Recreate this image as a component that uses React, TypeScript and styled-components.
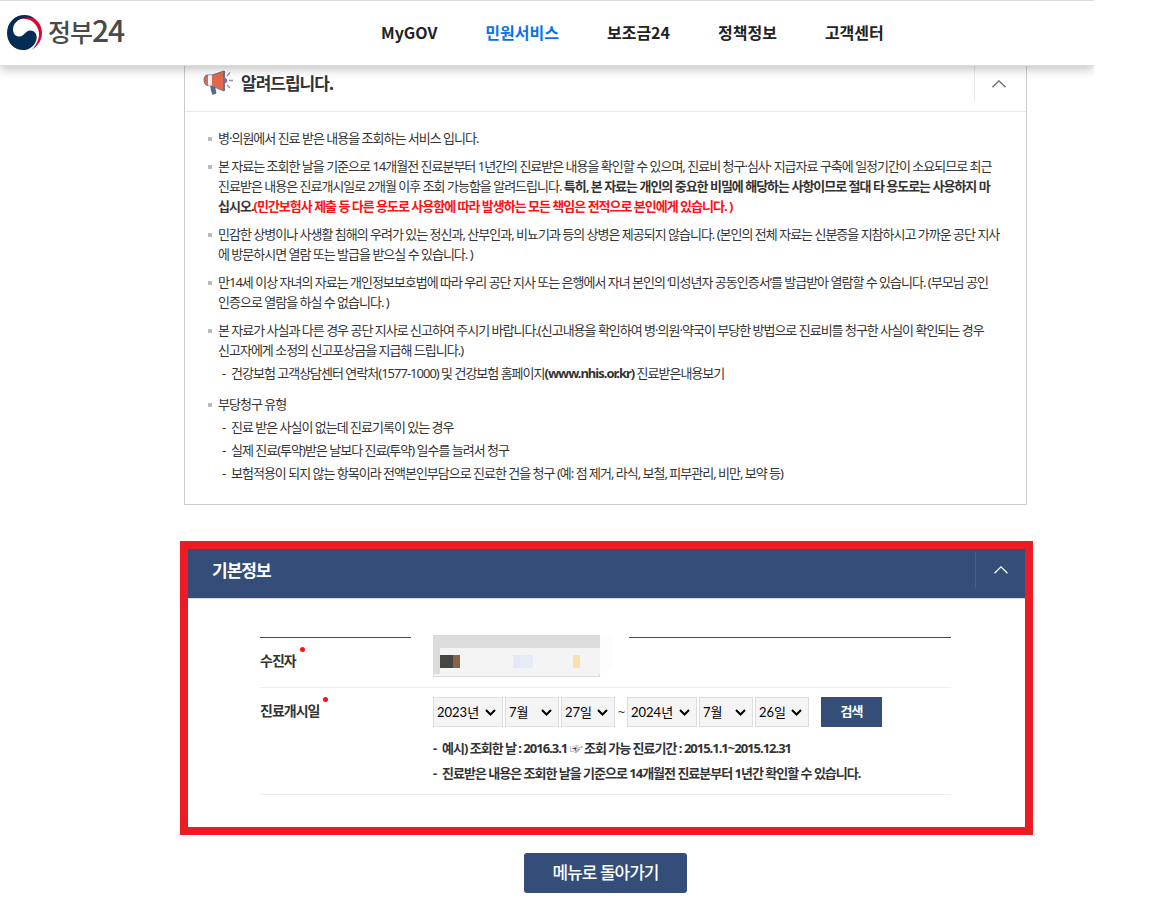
import React from "react";
import styled, { createGlobalStyle } from "styled-components";

const navy = "#344d79";

const GlobalStyle = createGlobalStyle`
  *, *::before, *::after { box-sizing: border-box; }
  body {
    margin: 0;
    background: #fff;
    color: #333;
    font-family: "Noto Sans", "Noto Sans CJK KR", sans-serif;
    font-size: 13px;
    line-height: 20px;
    letter-spacing: -1px;
  }
  button, select { font-family: inherit; }
  h1, h2, ul, p { margin: 0; padding: 0; }
  ul { list-style: none; }
`;

const Page = styled.div`
  margin-right: 58px;
`;

const Header = styled.header`
  position: relative;
  z-index: 1;
  display: flex;
  align-items: center;
  height: 66px;
  padding-bottom: 2px;
  background: #fff;
  border-top: 1px solid #ddd;
  border-bottom: 1px solid #dcdcdc;
  box-shadow: 0 3px 10px rgba(0, 0, 0, 0.25);
  clip-path: inset(0 0 -20px 0);
  font-family: "Noto Sans CJK KR", sans-serif;
`;

const Logo = styled.a`
  display: flex;
  align-items: center;
  gap: 6px;
  width: 381px;
  padding-left: 7px;
  color: #4a4a4a;
  font-size: 25px;
  font-weight: 500;
  line-height: 34px;
  letter-spacing: -1px;
  text-decoration: none;
`;

const LogoText = styled.span`
  padding-bottom: 4px;
`;

const LogoDigits = styled.span`
  font-size: 30px;
`;

const Nav = styled.nav`
  display: flex;
  gap: 48px;
`;

const NavLink = styled.a<{ $active?: boolean }>`
  color: ${(p) => (p.$active ? "#0a73e8" : "#222")};
  font-size: 16px;
  font-weight: 700;
  line-height: 24px;
  letter-spacing: normal;
  text-decoration: none;
`;

const Main = styled.main`
  padding: 0 61px 0 180px;
`;

const Notice = styled.section`
  margin: 0 6px 36px 4px;
  border: 1px solid #ccc;
  border-top: 0;
`;

const NoticeHead = styled.div`
  display: flex;
  align-items: flex-start;
  height: 46px;
  padding-left: 18px;
  border-bottom: 1px solid #e8e8e8;
`;

const Title = styled.h2`
  flex: 1;
  font-family: "Noto Sans CJK KR", sans-serif;
  font-size: 17px;
  font-weight: 700;
  line-height: 24px;
`;

const NoticeTitle = styled(Title)`
  display: flex;
  align-items: center;
  gap: 8px;
  height: 33px;
`;

const Toggle = styled.button<{ $dark?: boolean }>`
  display: flex;
  align-items: center;
  justify-content: center;
  width: ${(p) => (p.$dark ? 50 : 52)}px;
  height: 36px;
  padding: 0 ${(p) => (p.$dark ? 0 : 3)}px 0 0;
  border: 0;
  border-left: 1px solid ${(p) => (p.$dark ? "#47608c" : "#e8e8e8")};
  background: none;
  color: ${(p) => (p.$dark ? "#fff" : "#666")};
`;

const NoticeList = styled.ul`
  display: flex;
  flex-direction: column;
  gap: 8px;
  padding: 16px 16px 21px 23px;
`;

const NoticeItem = styled.li`
  padding-left: 10px;
  background: linear-gradient(#bbb, #bbb) 0 9px / 4px 4px no-repeat;
`;

const SubList = styled.ul`
  display: flex;
  flex-direction: column;
  gap: 3px;
  padding-top: 3px;
`;

const SubItem = styled.li`
  display: flex;
  gap: 4px;
  padding-left: 4px;
  &::before { content: "-"; width: 5px; }
`;

const NoticeGap = styled(SubList)`
  padding-bottom: 3px;
`;

const Warning = styled.strong`
  color: #f11;
`;

const Frame = styled.section`
  border: 8px solid #ed1c24;
`;

const FrameHead = styled.div`
  display: flex;
  align-items: flex-start;
  height: 50px;
  padding: 3px 0 0 24px;
  background: ${navy};
  border-bottom: 1px solid #d0d5de;
`;

const FrameTitle = styled(Title)`
  color: #fff;
  line-height: 36px;
`;

const FrameBody = styled.div`
  padding: 38px 74px 32px 72px;
`;

const Table = styled.table`
  width: 100%;
  table-layout: fixed;
  border-collapse: collapse;
`;

const LabelCol = styled.col`
  width: 151px;
`;

const ValueCol = styled.col`
  width: 218px;
`;

const Row = styled.tr`
  border-bottom: 1px solid #eee;
`;

const LabelCell = styled.th<{ $rule?: boolean }>`
  padding: 9px 0 0;
  vertical-align: top;
  text-align: left;
  border-top: ${(p) => (p.$rule ? `1px solid ${navy}` : "0")};
`;

const Label = styled.label`
  display: flex;
  gap: 4px;
  font-size: 14px;
  line-height: 28px;
  &::after {
    content: "";
    width: 5px;
    height: 5px;
    border-radius: 50%;
    background: #f11;
  }
`;

const MaskCell = styled.td`
  height: 50px;
  padding: 0 0 0 22px;
  vertical-align: top;
`;

const Mask = styled.svg`
  display: block;
  margin-top: -3px;
`;

const RuleCell = styled.td`
  border-top: 1px solid ${navy};
`;

const DateCell = styled.td`
  height: 107px;
  padding: 9px 0 8px 22px;
  vertical-align: top;
`;

const Dates = styled.div`
  display: flex;
  align-items: center;
  gap: 2px;
`;

const SelectBox = styled.span<{ $wide?: boolean }>`
  position: relative;
  display: flex;
  width: ${(p) => (p.$wide ? 70 : 54)}px;
`;

const Select = styled.select`
  appearance: none;
  width: 100%;
  height: 30px;
  padding: 0 0 0 3px;
  border: 1px solid #ddd;
  border-radius: 0;
  background: #f4f4f4;
  color: #000;
  font-family: Lato, "Noto Sans CJK KR", sans-serif;
  font-size: 13px;
  letter-spacing: normal;
`;

const SelectArrow = styled.svg`
  position: absolute;
  top: 12px;
  right: 7px;
  pointer-events: none;
`;

const Tilde = styled.span`
  width: 8px;
  text-align: center;
`;

const SearchButton = styled.button`
  width: 61px;
  height: 30px;
  margin-left: 10px;
  padding: 0 0 3px;
  border: 0;
  background: ${navy};
  color: #fff;
  font-size: 13px;
  font-weight: 700;
  letter-spacing: -1px;
`;

const Hints = styled.ul`
  display: flex;
  flex-direction: column;
  gap: 5px;
  padding-top: 11px;
  font-weight: 700;
`;

const Hint = styled.li`
  display: flex;
  gap: 4px;
  &::before { content: "-"; width: 5px; }
`;

const Actions = styled.div`
  display: flex;
  justify-content: center;
  padding: 18px 2px 15px 0;
`;

const BackButton = styled.button`
  width: 163px;
  height: 40px;
  padding: 0 0 3px;
  border: 0;
  border-radius: 3px;
  background: ${navy};
  color: #fff;
  font-size: 17px;
  font-weight: 500;
  letter-spacing: -1px;
`;

const Emblem = () => (
  <svg width="35" height="35" viewBox="0 0 34 34" aria-hidden="true">
    <path d="M5 8C12 -1 27 -1 32 9.500C36.500 18.500 33 28.500 24 34C29.500 28 32.500 21 30.500 14.500C28 6 20 2.500 13.500 3.800C9.500 4.600 6.500 6.500 5 8Z" fill="#e6002d" />
    <path d="M4.500 5.500C11 -1.500 22 -1.500 27.500 4.300C20 .5 10 3 6.500 10.500C4.800 15 6.500 20.500 11.500 20.800C17 21.200 17.500 15 22.500 15C27 15 29.500 19 28.700 23.500C27 30.500 21.500 34 15.500 34C7 34 0 27 0 17.500C0 13 1.500 8.500 4.500 5.500Z" fill="#052c52" />
  </svg>
);

const Megaphone = () => (
  <svg width="30" height="27" viewBox="0 0 30 27" aria-hidden="true">
    <path d="M7 16L12 17L13.500 24.500L9.500 26L8 22Z" fill="#5d6b80" />
    <path d="M5 6C2 6 1 8 1 11C1 14 2.500 16.500 5 16.500L9 17L21 22V2L9 6Z" fill="#e2684a" stroke="#6b7590" />
    <path d="M5 6.200H9V16.500H5Z" fill="#f4f4f7" />
    <path d="M20 2H22V22H20Z" fill="#6b7590" />
    <path d="M22 9.500C24.500 10 24.500 13.500 22 14Z" fill="#e2684a" stroke="#6b7590" />
    <path d="M24 7L27 3.500M26 11.500H30M24 16L27 19" stroke="#8a91a3" strokeWidth="1.300" />
  </svg>
);

const Chevron = () => (
  <svg width="14" height="8" viewBox="0 0 14 8" fill="none" stroke="currentColor" strokeWidth="1.300" aria-hidden="true">
    <path d="M.5 7.300L7 .9L13.500 7.300" />
  </svg>
);

const MaskedName = () => (
  <Mask width="180" height="42" shapeRendering="crispEdges" role="img" aria-label="수진자">
    <path d="M167 0H180V33H173V39H167Z" fill="#fdfdfd" />
    <path d="M0 0H167V42H0Z" fill="#dcdcdc" />
    <path d="M7 13H167V39H166V41H1V39H7Z" fill="#f4f4f4" />
    <path d="M7 20H20V33H7Z" fill="#454541" />
    <path d="M20 20H27V33H20Z" fill="#876344" />
    <path d="M80 20H87V33H80Z" fill="#e6e6f5" />
    <path d="M87 20H100V33H87Z" fill="#e4ecf6" />
    <path d="M140 20H147V33H140Z" fill="#f7e1ae" />
  </Mask>
);

const navItems = ["MyGOV", "민원서비스", "보조금24", "정책정보", "고객센터"];

function DateSelect({ value, label, id, wide }: { value: string; label?: string; id?: string; wide?: boolean }) {
  return (
    <SelectBox $wide={wide}>
      <Select id={id} aria-label={label}><option>{value}</option></Select>
      <SelectArrow width="11" height="7" viewBox="0 0 11 7" fill="none" stroke="#000" strokeWidth="2" aria-hidden="true">
        <path d="M1 1L5.500 5.500L10 1" />
      </SelectArrow>
    </SelectBox>
  );
}

export default function App() {
  return (
    <Page>
      <GlobalStyle />
      <Header>
        <Logo href="#">
          <Emblem />
          <LogoText>정부<LogoDigits>24</LogoDigits></LogoText>
        </Logo>
        <Nav>
          {navItems.map((item) => (
            <NavLink key={item} href="#" $active={item === "민원서비스"}>{item}</NavLink>
          ))}
        </Nav>
      </Header>
      <Main>
        <Notice>
          <NoticeHead>
            <NoticeTitle><Megaphone />알려드립니다.</NoticeTitle>
            <Toggle aria-label="알림 접기"><Chevron /></Toggle>
          </NoticeHead>
          <NoticeList>
            <NoticeItem>병·의원에서 진료 받은 내용을 조회하는 서비스 입니다.</NoticeItem>
            <NoticeItem>
              본 자료는 조회한 날을 기준으로 14개월전 진료분부터 1년간의 진료받은 내용을 확인할 수 있으며, 진료비 청구·심사· 지급자료 구축에 일정기간이 소요되므로 최근<br />
              진료받은 내용은 진료개시일로 2개월 이후 조회 가능함을 알려드립니다. <strong>특히, 본 자료는 개인의 중요한 비밀에 해당하는 사항이므로 절대 타 용도로는 사용하지 마<br />
              십시오.</strong><Warning>(민간보험사 제출 등 다른 용도로 사용함에 따라 발생하는 모든 책임은 전적으로 본인에게 있습니다. )</Warning>
            </NoticeItem>
            <NoticeItem>
              민감한 상병이나 사생활 침해의 우려가 있는 정신과, 산부인과, 비뇨기과 등의 상병은 제공되지 않습니다. (본인의 전체 자료는 신분증을 지참하시고 가까운 공단 지사<br />
              에 방문하시면 열람 또는 발급을 받으실 수 있습니다. )
            </NoticeItem>
            <NoticeItem>
              만14세 이상 자녀의 자료는 개인정보보호법에 따라 우리 공단 지사 또는 은행에서 자녀 본인의 ‘미성년자 공동인증서’를 발급받아 열람할 수 있습니다. (부모님 공인<br />
              인증으로 열람을 하실 수 없습니다. )
            </NoticeItem>
            <NoticeItem>
              본 자료가 사실과 다른 경우 공단 지사로 신고하여 주시기 바랍니다.(신고내용을 확인하여 병·의원·약국이 부당한 방법으로 진료비를 청구한 사실이 확인되는 경우<br />
              신고자에게 소정의 신고포상금을 지급해 드립니다.)
              <NoticeGap>
                <SubItem><span>건강보험 고객상담센터 연락처(1577-1000) 및 건강보험 홈페이지<strong>(www.nhis.or.kr)</strong> 진료받은내용보기</span></SubItem>
              </NoticeGap>
            </NoticeItem>
            <NoticeItem>
              부당청구 유형
              <SubList>
                <SubItem>진료 받은 사실이 없는데 진료기록이 있는 경우</SubItem>
                <SubItem>실제 진료(투약)받은 날보다 진료(투약) 일수를 늘려서 청구</SubItem>
                <SubItem>보험적용이 되지 않는 항목이라 전액본인부담으로 진료한 건을 청구 (예: 점 제거, 라식, 보철, 피부관리, 비만, 보약 등)</SubItem>
              </SubList>
            </NoticeItem>
          </NoticeList>
        </Notice>

        <Frame>
          <FrameHead>
            <FrameTitle>기본정보</FrameTitle>
            <Toggle $dark aria-label="기본정보 접기"><Chevron /></Toggle>
          </FrameHead>
          <FrameBody>
            <Table>
              <colgroup><LabelCol /><ValueCol /><col /></colgroup>
              <tbody>
                <Row>
                  <LabelCell $rule scope="row"><Label as="span">수진자</Label></LabelCell>
                  <MaskCell><MaskedName /></MaskCell>
                  <RuleCell />
                </Row>
                <Row>
                  <LabelCell scope="row"><Label htmlFor="start-year">진료개시일</Label></LabelCell>
                  <DateCell colSpan={2}>
                    <Dates>
                      <DateSelect wide id="start-year" value="2023년" />
                      <DateSelect label="시작 월" value="7월" />
                      <DateSelect label="시작 일" value="27일" />
                      <Tilde>~</Tilde>
                      <DateSelect wide label="종료 년" value="2024년" />
                      <DateSelect label="종료 월" value="7월" />
                      <DateSelect label="종료 일" value="26일" />
                      <SearchButton>검색</SearchButton>
                    </Dates>
                    <Hints>
                      <Hint>예시) 조회한 날 : 2016.3.1 ☞ 조회 가능 진료기간 : 2015.1.1~2015.12.31</Hint>
                      <Hint>진료받은 내용은 조회한 날을 기준으로 14개월전 진료분부터 1년간 확인할 수 있습니다.</Hint>
                    </Hints>
                  </DateCell>
                </Row>
              </tbody>
            </Table>
          </FrameBody>
        </Frame>
        <Actions><BackButton>메뉴로 돌아가기</BackButton></Actions>
      </Main>
    </Page>
  );
}
